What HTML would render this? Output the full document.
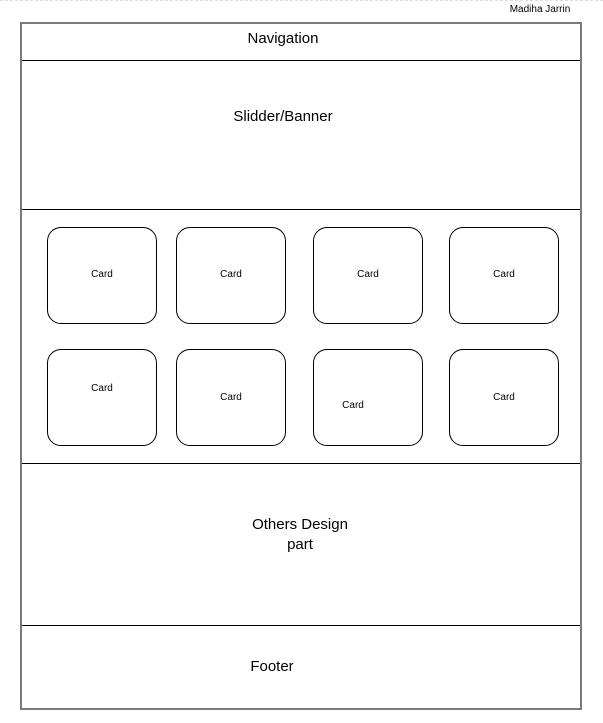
<!DOCTYPE html>
<html><head><style>
body{margin:0;width:603px;height:723px;background:#fff;position:relative;overflow:hidden;font-family:"Liberation Sans",Arial,sans-serif;}
.a{position:absolute;}
.dash{left:0;top:0;width:603px;border-top:1px dashed #ddd;}
.outer{left:20px;top:22px;width:558px;height:684px;border:2px solid #7a7a7a;}
.line{left:22px;width:558px;height:1px;background:#000;}
.t{position:absolute;text-align:center;color:#000;}
.card{position:absolute;width:110px;height:97px;border:1px solid #000;border-radius:14px;box-sizing:border-box;}
.card span{position:absolute;font-size:10px;width:100%;text-align:center;left:0;}
</style></head><body>
<div class="a dash"></div>
<div class="t" style="left:490px;top:4px;width:100px;font-size:10px;">Madiha Jarrin</div>
<div class="a outer"></div>
<div class="a line" style="top:60px"></div>
<div class="a line" style="top:209px"></div>
<div class="a line" style="top:463px"></div>
<div class="a line" style="top:625px"></div>
<div class="t" style="left:22px;width:522px;top:30px;font-size:15px;">Navigation</div>
<div class="t" style="left:22px;width:522px;top:108px;font-size:15px;">Slidder/Banner</div>
<div class="t" style="left:22px;width:556px;top:515px;font-size:15px;line-height:20px;">Others Design<br>part</div>
<div class="t" style="left:22px;width:500px;top:658px;font-size:15px;">Footer</div>

<div class="card" style="left:47px;top:227px"><span style="top:41px">Card</span></div>
<div class="card" style="left:176px;top:227px"><span style="top:41px">Card</span></div>
<div class="card" style="left:313px;top:227px"><span style="top:41px">Card</span></div>
<div class="card" style="left:449px;top:227px"><span style="top:41px">Card</span></div>
<div class="card" style="left:47px;top:349px"><span style="top:33px">Card</span></div>
<div class="card" style="left:176px;top:349px"><span style="top:42px">Card</span></div>
<div class="card" style="left:313px;top:349px"><span style="top:50px;left:-15px">Card</span></div>
<div class="card" style="left:449px;top:349px"><span style="top:42px">Card</span></div>
</body></html>
